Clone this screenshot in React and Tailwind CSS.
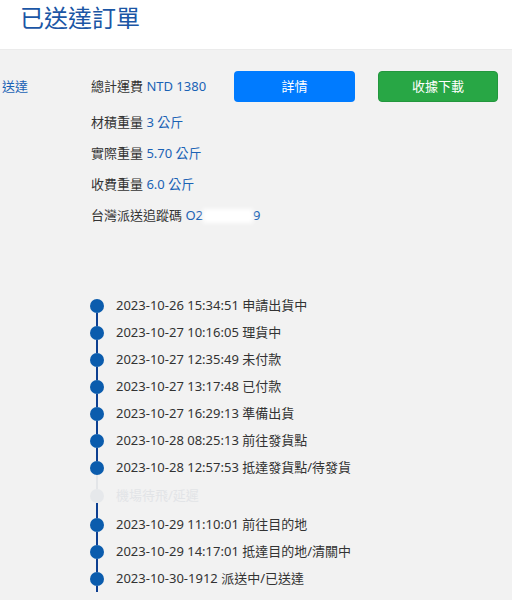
import React from 'react';

const info = [
  { label: '材積重量', value: '3 公斤' },
  { label: '實際重量', value: '5.70 公斤' },
  { label: '收費重量', value: '6.0 公斤' },
];

const steps = [
  { time: '2023-10-26 15:34:51', text: '申請出貨中' },
  { time: '2023-10-27 10:16:05', text: '理貨中' },
  { time: '2023-10-27 12:35:49', text: '未付款' },
  { time: '2023-10-27 13:17:48', text: '已付款' },
  { time: '2023-10-27 16:29:13', text: '準備出貨' },
  { time: '2023-10-28 08:25:13', text: '前往發貨點' },
  { time: '2023-10-28 12:57:53', text: '抵達發貨點/待發貨' },
  { time: '', text: '機場待飛/延遲', pending: true },
  { time: '2023-10-29 11:10:01', text: '前往目的地' },
  { time: '2023-10-29 14:17:01', text: '抵達目的地/清關中' },
  { time: '2023-10-30-1912', text: '派送中/已送達' },
];

const TimelineRow = ({ step, first, last, topGray, bottomGray }) => (
  <div className={`flex ${step.pending ? 'h-[30px]' : 'h-[27px]'}`}>
    <div className="w-[14px] flex flex-col items-center">
      <div className={`flex-1 w-[2px] ${first ? 'bg-transparent' : topGray ? 'bg-[#e3e5e8]' : 'bg-[#0d3f91]'}`} />
      <div className={`w-[14px] h-[14px] rounded-full ${step.pending ? 'bg-[#e6e8eb]' : 'bg-[#0b5cad]'}`} />
      <div className={`flex-1 w-[2px] ${last ? 'bg-[#0d3f91]' : bottomGray ? 'bg-[#e3e5e8]' : 'bg-[#0d3f91]'}`} />
    </div>
    <div className={`flex items-center pl-[12px] text-[13px] ${step.pending ? 'text-[#e2e4e7]' : 'text-[#333]'}`}>
      {step.time && <span>{step.time}&nbsp;</span>}
      <span>{step.text}</span>
    </div>
  </div>
);

const App = () => {
  return (
    <div className="w-[512px] h-[600px] overflow-hidden bg-[#f2f2f2]" style={{ fontFamily: '"Noto Sans", "Noto Sans CJK TC", sans-serif' }}>
      {/* header */}
      <div className="h-[50px] bg-white border-b border-[#ebebeb] pl-[20px] flex items-center">
        <h1 className="text-[24px] leading-none text-[#1b56a5] pb-[14px]">已送達訂單</h1>
      </div>

      <div className="flex pt-[21px]">
        <div className="w-[91px] pl-[2px] h-[31px] flex items-center text-[13px] text-[#1a62b5]">送達</div>

        <div className="flex-1">
          <div className="flex items-center h-[31px]">
            <div className="w-[143px] text-[13px] text-[#333]">
              總計運費 <span className="text-[#1a62b5]">NTD 1380</span>
            </div>
            <button className="w-[121px] h-[31px] rounded-[4px] bg-[#007bff] text-white text-[13px]">詳情</button>
            <button className="ml-[23px] w-[120px] h-[31px] rounded-[4px] bg-[#28a745] border border-[#23973e] text-white text-[13px]">收據下載</button>
          </div>

          <div className="pt-[5px] text-[13px] text-[#333]">
            {info.map((r) => (
              <div key={r.label} className="h-[31px] flex items-center">
                {r.label}&nbsp;<span className="text-[#1a62b5]">{r.value}</span>
              </div>
            ))}
            <div className="h-[31px] flex items-center">
              台灣派送追蹤碼&nbsp;<span className="text-[#1a62b5]">O2</span>
              <span className="inline-block w-[50px] h-[14px] bg-white blur-[2px]" />
              <span className="text-[#1a62b5]">9</span>
            </div>
          </div>
        </div>
      </div>

      {/* timeline */}
      <div className="pl-[90px] pt-[61px]">
        {steps.map((s, i) => (
          <TimelineRow
            key={i}
            step={s}
            first={i === 0}
            last={i === steps.length - 1}
            topGray={s.pending}
            bottomGray={steps[i + 1] && steps[i + 1].pending}
          />
        ))}
      </div>
    </div>
  );
};

export default App;
